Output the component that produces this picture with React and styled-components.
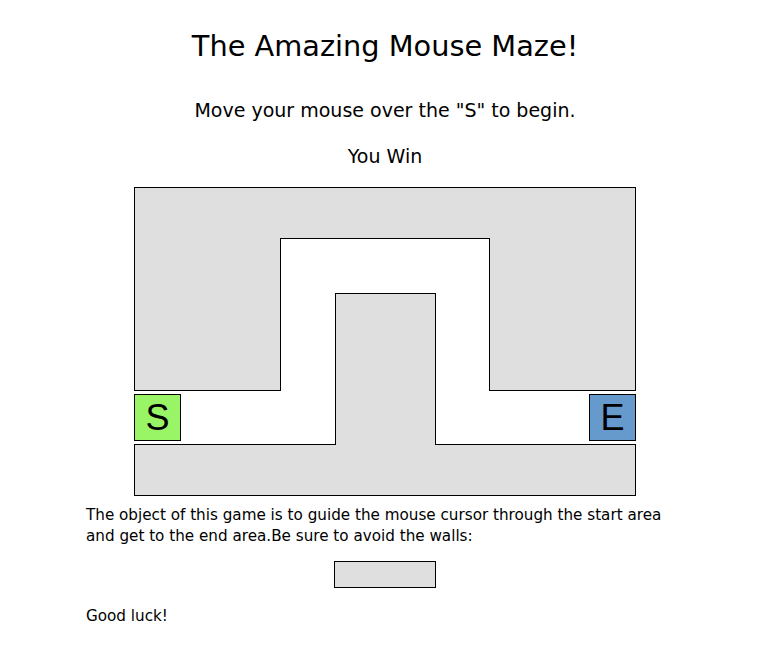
import React from "react";
import styled, { createGlobalStyle } from "styled-components";

const Global = createGlobalStyle`
  html, body { margin: 0; padding: 0; background: #fff; }
  body { font-family: "DejaVu Sans", "Liberation Sans", sans-serif; color: #000; }
`;

const Page = styled.div`
  width: 600px;
  margin: 0 auto;
  padding-top: 28px;
  display: flex;
  flex-direction: column;
  align-items: center;
`;

const Title = styled.h1`
  margin: 0;
  font-weight: normal;
  font-size: 28.8px;
  line-height: 36px;
  text-align: center;
`;

const Line = styled.p`
  margin: ${(p) => p.$top || 0}px 0 0;
  font-size: 19px;
  line-height: 24px;
  text-align: center;
`;

const Maze = styled.div`
  position: relative;
  width: 502px;
  height: 309px;
  margin-top: 19px;
`;

const Wall = styled.div`
  position: absolute;
  box-sizing: border-box;
  background: #dfdfdf;
  border: 1px solid #000;
`;

const UBlock = styled(Wall)`
  left: 0; top: 0; width: 502px; height: 204px;
`;

const Corridor = styled.div`
  position: absolute;
  box-sizing: border-box;
  background: #fff;
  border: 1px solid #000;
  border-bottom: none;
  left: 146px; top: 51px; width: 210px; height: 153px;
`;

const BottomBar = styled(Wall)`
  left: 0; top: 257px; width: 502px; height: 52px;
`;

const Pillar = styled(Wall)`
  border-bottom: none;
  left: 201px; top: 106px; width: 101px; height: 152px;
`;

const Pad = styled.div`
  position: absolute;
  box-sizing: border-box;
  top: 207px;
  width: 47px;
  height: 47px;
  border: 1px solid #000;
  background: ${(p) => p.$bg};
  ${(p) => (p.$right ? "right: 0;" : "left: 0;")}
  display: flex;
  align-items: center;
  justify-content: center;
  font-family: "Liberation Sans", Arial, sans-serif;
  font-size: 36px;
  line-height: 1;
`;

const Text = styled.p`
  align-self: stretch;
  margin: ${(p) => p.$top || 0}px 0 0 1px;
  font-size: 15.2px;
  line-height: 21px;
`;

const Sample = styled.div`
  box-sizing: border-box;
  width: 102px;
  height: 27px;
  margin-top: 14px;
  background: #dfdfdf;
  border: 1px solid #000;
`;

export default function App() {
  return (
    <>
      <Global />
      <Page>
        <Title>The Amazing Mouse Maze!</Title>
        <Line $top={34}>Move your mouse over the "S" to begin.</Line>
        <Line $top={22}>You Win</Line>
        <Maze>
          <UBlock />
          <Corridor />
          <BottomBar />
          <Pillar />
          <Pad $bg="#99f566">S</Pad>
          <Pad $bg="#6699cc" $right>E</Pad>
        </Maze>
        <Text $top={9}>
          The object of this game is to guide the mouse cursor through the start area
          and get to the end area.Be sure to avoid the walls:
        </Text>
        <Sample />
        <Text $top={18}>Good luck!</Text>
      </Page>
    </>
  );
}
